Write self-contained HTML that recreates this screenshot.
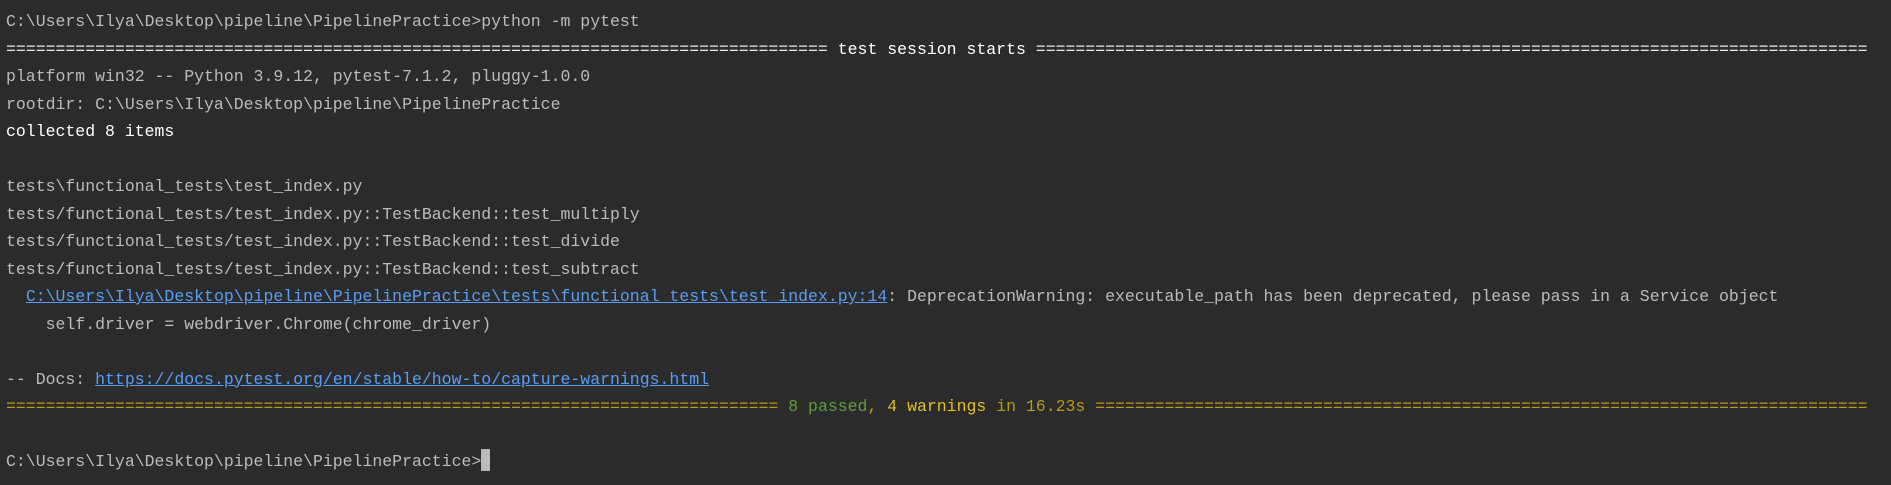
<!DOCTYPE html>
<html><head><meta charset="utf-8"><style>
html,body{margin:0;padding:0;background:#2b2b2b;width:1891px;height:485px;overflow:hidden}
pre{margin:0;position:absolute;left:6px;top:8px;font-family:"Liberation Mono",monospace;font-size:16.5px;line-height:27.5px;color:#bbbbbb;white-space:pre}
.b{color:#ffffff}
.w{color:#e8e8e8}
.l{color:#589df6;text-decoration:underline}
.y{color:#b59b16}
.g{color:#5f9d3b}
.yb{color:#e3bf22}
.cur{display:inline-block;width:9px;height:22px;background:#bbbbbb;vertical-align:-5px}
</style></head><body><pre>C:\Users\Ilya\Desktop\pipeline\PipelinePractice&gt;python -m pytest
<span class="w">=================================================================================== </span><span class="b">test session starts</span><span class="w"> ====================================================================================</span>
platform win32 -- Python 3.9.12, pytest-7.1.2, pluggy-1.0.0
rootdir: C:\Users\Ilya\Desktop\pipeline\PipelinePractice
<span class="b">collected 8 items</span>

tests\functional_tests\test_index.py
tests/functional_tests/test_index.py::TestBackend::test_multiply
tests/functional_tests/test_index.py::TestBackend::test_divide
tests/functional_tests/test_index.py::TestBackend::test_subtract
  <span class="l">C:\Users\Ilya\Desktop\pipeline\PipelinePractice\tests\functional_tests\test_index.py:14</span>: DeprecationWarning: executable_path has been deprecated, please pass in a Service object
    self.driver = webdriver.Chrome(chrome_driver)

-- Docs: <span class="l">https://docs.pytest.org/en/stable/how-to/capture-warnings.html</span>
<span class="y">============================================================================== </span><span class="g">8 passed</span><span class="y">, </span><span class="yb">4 warnings</span><span class="y"> in 16.23s ==============================================================================</span>

C:\Users\Ilya\Desktop\pipeline\PipelinePractice&gt;<span class="cur"></span></pre></body></html>
